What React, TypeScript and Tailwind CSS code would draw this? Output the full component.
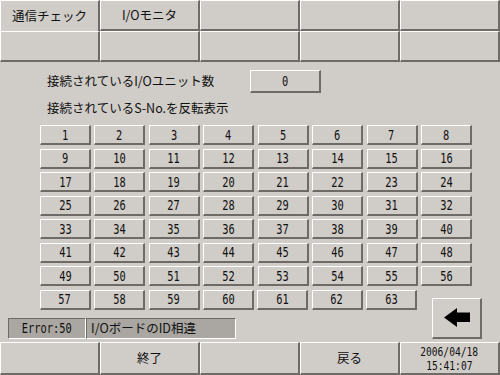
import React from "react";

const jp = '"Noto Sans CJK JP", "Noto Sans", sans-serif';
const mono = '"DejaVu Sans Mono", "Liberation Mono", "Noto Sans CJK JP", monospace';

const raised =
  "border-t border-l border-t-white border-l-white border-r-2 border-b-2 border-r-[#6e6b67] border-b-[#6e6b67]";

function Cell({ children, noBottom }: { children?: React.ReactNode; noBottom?: boolean }) {
  return (
    <div
      className={`flex items-center justify-center border-t border-l border-t-white border-l-white border-r-2 border-r-[#6e6b67] ${
        noBottom ? "" : "border-b-2 border-b-[#6e6b67]"
      } text-[12.5px] text-[#111]`}
      style={{ fontFamily: jp }}
    >
      {children}
    </div>
  );
}

function Digits({ children, small }: { children: React.ReactNode; small?: boolean }) {
  return (
    <span
      className={`inline-block scale-x-[0.74] ${small ? "text-[13px] leading-[13px]" : "text-[14px] leading-[14px]"}`}
      style={{ fontFamily: mono }}
    >
      {children}
    </span>
  );
}

function NumBtn({ n }: { n: number }) {
  return (
    <div className={`h-[20px] flex items-center justify-center bg-[#d0ccc7] ${raised} text-[#111]`}>
      <Digits>{n}</Digits>
    </div>
  );
}

export default function App() {
  const rows = Array.from({ length: 7 }, (_, r) => Array.from({ length: 8 }, (_, c) => r * 8 + c + 1));
  const last = [57, 58, 59, 60, 61, 62, 63];

  return (
    <div className="w-[500px] h-[375px] bg-[#d0ccc7] flex flex-col overflow-hidden">
      {/* Tabs */}
      <div className="grid grid-cols-5 grid-rows-[31px_31px]">
        <Cell noBottom>通信チェック</Cell>
        <Cell>I/Oモニタ</Cell>
        <Cell />
        <Cell />
        <Cell />
        <Cell />
        <Cell />
        <Cell />
        <Cell />
        <Cell />
      </div>

      {/* Main */}
      <div className="flex-1 flex flex-col" style={{ fontFamily: jp }}>
        <div className="flex items-center mt-[8px] h-[23px]">
          <div className="pl-[47px] w-[250px] text-[12.5px] text-[#111]">接続されているI/Oユニット数</div>
          <div className={`w-[71px] h-[23px] flex items-center justify-center ${raised} text-[#111]`}>
            <Digits>0</Digits>
          </div>
        </div>
        <div className="pl-[47px] mt-[4px] h-[22px] flex items-center text-[12.5px] text-[#111]">
          接続されているS-No.を反転表示
        </div>

        <div className="ml-[40px] mt-[6px] w-[432px] grid grid-cols-8 gap-x-[3.5px] gap-y-[3.5px]">
          {rows.flat().map((n) => (
            <NumBtn key={n} n={n} />
          ))}
        </div>

        <div className="flex mt-[3.5px]">
          <div className="w-[424px] flex flex-col">
            <div className="ml-[40px] w-[377px] grid grid-cols-7 gap-x-[3.5px]">
              {last.map((n) => (
                <NumBtn key={n} n={n} />
              ))}
            </div>
            <div className="flex ml-[8px] mt-[8px] h-[21px]">
              <div className="w-[78px] flex items-center justify-center bg-[#aaa6a1] border-t border-l border-t-[#6e6b67] border-l-[#6e6b67] border-b border-r border-b-white border-r-white text-[#111]">
                <Digits>Error:50</Digits>
              </div>
              <div className="w-[150px] flex items-center pl-[4px] bg-[#aaa6a1] border-t border-l border-t-[#6e6b67] border-l-[#6e6b67] border-b border-r border-b-white border-r-white text-[12.5px] text-[#111]">
                I/OボードのID相違
              </div>
            </div>
          </div>
          <div className={`ml-[8px] mt-[8px] w-[50px] h-[41px] flex items-center justify-center ${raised}`}>
            <svg width="26" height="19" viewBox="0 0 26 19">
              <polygon points="0,9.5 13,0 13,4.5 26,4.5 26,14 13,14 13,19" fill="#000" />
            </svg>
          </div>
        </div>
      </div>

      {/* Footer */}
      <div className="grid grid-cols-5 h-[33px]">
        <Cell />
        <Cell>終了</Cell>
        <Cell />
        <Cell>戻る</Cell>
        <div className={`flex flex-col items-center justify-center gap-[1px] ${raised} text-[#111]`}>
          <Digits small>2006/04/18</Digits>
          <Digits small>15:41:07</Digits>
        </div>
      </div>
    </div>
  );
}
